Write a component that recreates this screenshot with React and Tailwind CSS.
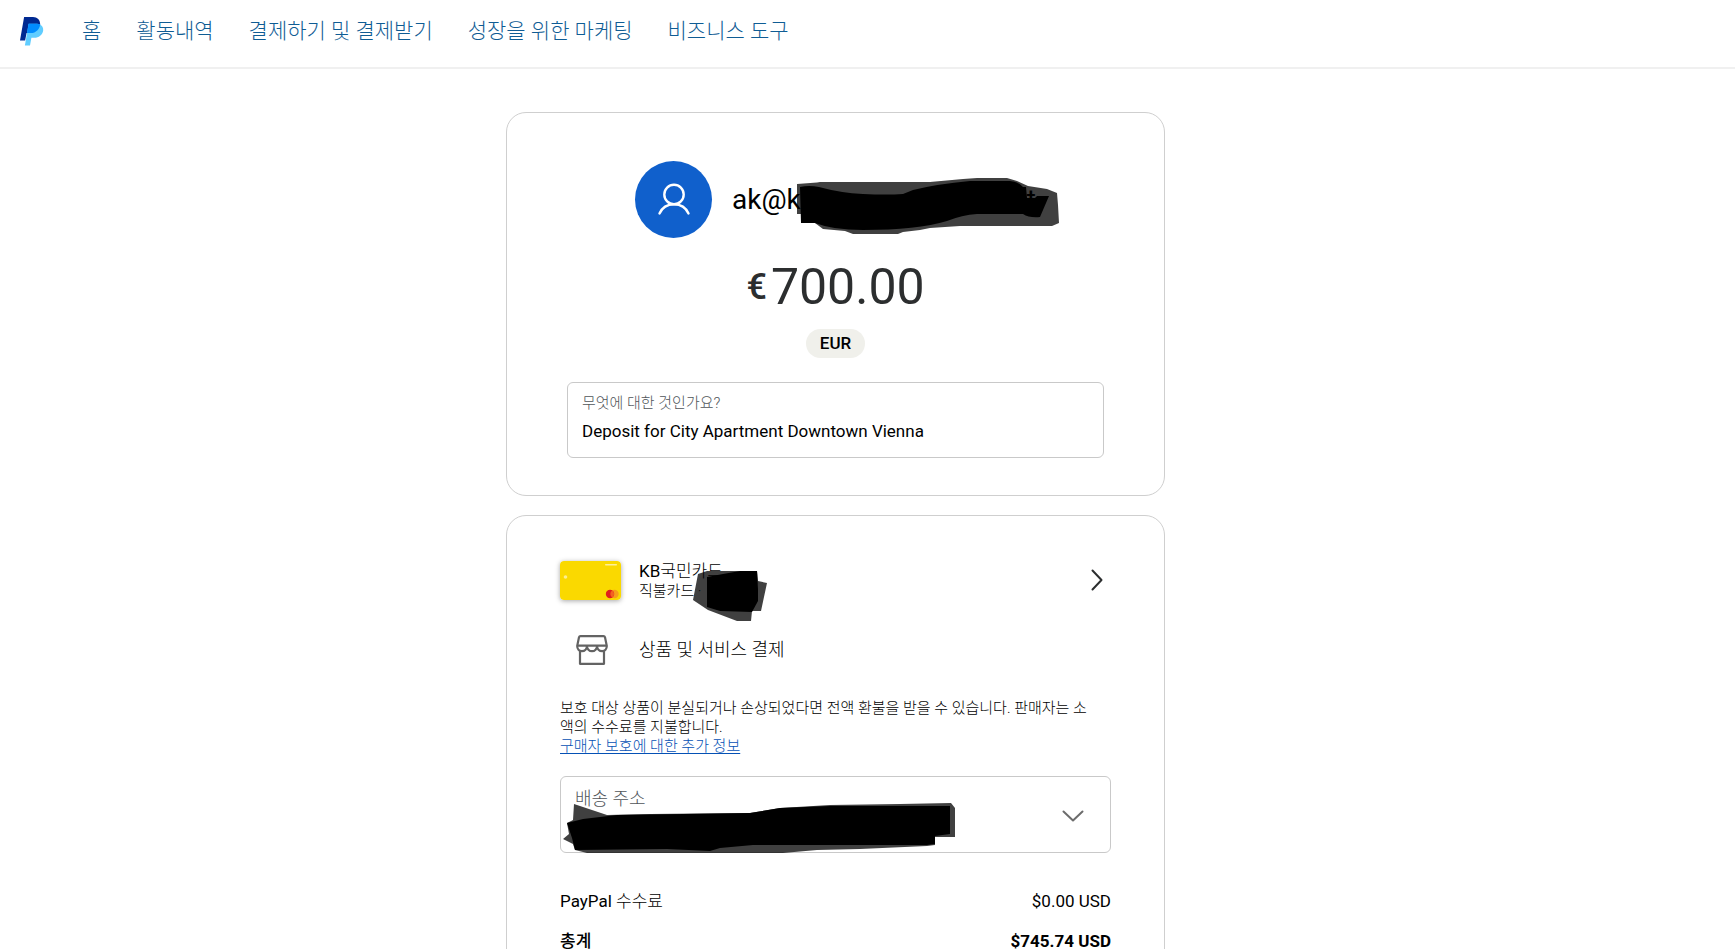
const navItems = ["홈", "활동내역", "결제하기 및 결제받기", "성장을 위한 마케팅", "비즈니스 도구"];

function PayPalMark() {
  return (
    <svg viewBox="0 0 24 29" className="h-[29px] w-6" aria-hidden="true">
      <path d="M20.2 7.2c0 4.8-4 8.9-9.4 8.9H6.6L5.100 23.400H0L4.100 0h8.900c4.300 0 7.200 3 7.200 7.200z" fill="#002991" />
      <path d="M20 7.500c2 .9 3.500 3.200 3.200 6-.6 4.500-4.500 7.300-8.800 7.300h-3L10 28.500H4.900L8.600 6.700h8.400c1.100 0 2.100.3 3 .8z" fill="#60CDFF" />
      <path d="M7 16.100 8.600 6.700h8.400c1.100 0 2.200.3 3.100.8-.3 4.700-4.300 8.600-9.300 8.600z" fill="#008CFF" />
    </svg>
  );
}

function Header() {
  return (
    <header className="flex h-[69px] items-center border-b-2 border-[#f0f0f0] px-5 pb-[5px]">
      <a href="#home" aria-label="PayPal" className="mr-[38px]">
        <PayPalMark />
      </a>
      <nav className="flex gap-[35px] text-[21px] font-light leading-6 text-[#0f5c94]">
        {navItems.map((item) => (
          <a key={item} href="#nav">
            {item}
          </a>
        ))}
      </nav>
    </header>
  );
}

function Redaction({ box, view, outer, inner }) {
  return (
    <svg viewBox={view} className={`pointer-events-none absolute ${box}`} aria-hidden="true">
      <path d={outer} fill="#000" fillOpacity=".75" />
      <path d={inner} fill="#000" />
    </svg>
  );
}

function AmountCard() {
  return (
    <section className="rounded-[20px] border border-[#cfcfcf] bg-white px-[60px] pt-12 pb-[37px]">
      <div className="flex items-center justify-center gap-5">
        <div className="flex size-[77px] shrink-0 items-center justify-center rounded-full bg-[#1060cc]">
          <svg viewBox="0 0 34 34" className="size-[34px]" fill="none" stroke="#fff" strokeWidth="2.4" strokeLinecap="round" aria-hidden="true">
            <circle cx="17" cy="11.500" r="9.700" />
            <path d="M2.500 30.500C5 24.800 10.500 21.200 17 21.200s12 3.600 14.500 9.300" />
          </svg>
        </div>
        <div className="relative flex w-[304px] justify-between text-[28px] leading-9 text-black">
          <span>ak@k</span>
          <span>at</span>
          <Redaction
            box="left-[65px] top-[-4px] h-[56px] w-[262px]"
            view="0 0 262 56"
            outer="M0 6 20 4.500 23 4H133L166 1 180 0H210L220 3 231 8 250 11 260 15 261 27 262 45 255 48H163L133 50 123 52 106 54 101 56H56L48 53 26 51 18 45H4V36H0z"
            inner="M3 9Q12 7 22 9Q44 15 66 16Q90 17 106 16L116 12Q140 6 173 3H213Q222 4 226 9H229L230 20H238L240 18H252L243 39Q232 40 226 36H180Q165 37 150 43Q120 52 66 52Q36 52 18 45H4z"
          />
        </div>
      </div>
      <div className="mt-5 flex items-center justify-center gap-1 text-[#2c2e2f]">
        <span className="text-[36px] font-medium leading-[58px]">€</span>
        <span className="text-[50px] leading-[58px]">700.00</span>
      </div>
      <div className="mt-[13px] flex justify-center">
        <button type="button" className="h-[29px] rounded-full bg-[#f0f0eb] px-[14px] text-[17px] font-medium text-black">
          EUR
        </button>
      </div>
      <div className="mt-6 rounded-md border border-[#c9c9c9] px-[14px] pt-[10px] pb-3">
        <label htmlFor="memo" className="block text-[15px] font-light leading-5 text-[#50555a]">
          무엇에 대한 것인가요?
        </label>
        <input
          id="memo"
          defaultValue="Deposit for City Apartment Downtown Vienna"
          className="mt-1 block h-7 w-full text-[17px] text-black outline-none"
        />
      </div>
    </section>
  );
}

function BankCard() {
  return (
    <svg viewBox="0 0 61 39" className="h-[39px] w-[61px] rounded-[4px] shadow-[0_1px_5px_rgba(0,0,0,0.35)]" aria-hidden="true">
      <rect width="61" height="39" rx="3" fill="#fad900" />
      <rect x="45" y="3" width="12" height="1.500" rx=".7" fill="#fdf09a" />
      <circle cx="5.500" cy="16" r="1.800" fill="#fdee90" />
      <circle cx="54.500" cy="33" r="4.200" fill="#f79e1b" />
      <circle cx="50" cy="33" r="4.200" fill="#e0201b" />
      <path d="M52.200 29.500a4.200 4.200 0 0 1 0 7 4.200 4.200 0 0 1 0-7z" fill="#f26322" />
    </svg>
  );
}

function StoreIcon() {
  return (
    <svg viewBox="0 0 32 30" className="h-[30px] w-8" fill="none" stroke="#636363" strokeWidth="2.200" strokeLinejoin="round" aria-hidden="true">
      <path d="M4.500 1.200h23c.8 0 1.300.4 1.500 1.100L30.800 11c0 2.800-2 5.200-4.700 5.200-2.900 0-5-2.400-5-5.200 0 2.800-2.300 5.200-5.100 5.200s-5.100-2.400-5.100-5.200c0 2.800-2.100 5.200-5 5.200-2.700 0-4.700-2.400-4.700-5.200L3 2.300c.2-.7.7-1.100 1.500-1.100z" />
      <path d="M1.200 10.700h29.600M4 16v12.800h24V16" />
    </svg>
  );
}

function PaymentCard() {
  return (
    <section className="rounded-[20px] border border-[#cfcfcf] bg-white px-[53px] pt-11 pb-12 text-black">
      <button type="button" className="flex w-full items-center text-left">
        <BankCard />
        <span className="relative ml-[18px] flex flex-1 flex-col">
          <span className="text-[17px] leading-[22px]">
            KB<span className="font-light">국민카드</span>
          </span>
          <span className="text-[15px] font-light leading-[18px]">직불카드 ·</span>
          <Redaction
            box="left-[54px] top-[10px] h-[51px] w-[74px]"
            view="0 0 74 51"
            outer="M5 4 14 1H64L65 11 74 13 68 41H59L58 51H44L15 40 0 30z"
            inner="M14 7 30 4 47 1H64L65 19V31L59 42 27 41 14 37z"
          />
        </span>
        <svg viewBox="0 0 12 22" className="mr-2 h-[22px] w-3" fill="none" stroke="#2c2e2f" strokeWidth="2" strokeLinecap="round" strokeLinejoin="round" aria-hidden="true">
          <path d="M1.500 1.500 10.500 11l-9 9.500" />
        </svg>
      </button>
      <div className="mt-[35px] flex items-center">
        <div className="flex w-[79px] pl-4">
          <StoreIcon />
        </div>
        <p className="text-[18px] font-light leading-[30px]">상품 및 서비스 결제</p>
      </div>
      <p className="mt-[34px] pr-3 text-[15px] font-light leading-[19px]">
        보호 대상 상품이 분실되거나 손상되었다면 전액 환불을 받을 수 있습니다. 판매자는 소액의 수수료를 지불합니다.
      </p>
      <a href="#protection" className="block w-fit text-[15px] font-light leading-[19px] text-[#0551b5] underline underline-offset-2">
        구매자 보호에 대한 추가 정보
      </a>
      <div className="relative mt-5 rounded-md border border-[#c9c9c9] px-[14px] pt-[10px] pb-[9px]">
        <label htmlFor="address" className="block text-[18px] font-light leading-6 text-[#50555a]">
          배송 주소
        </label>
        <select id="address" className="block h-8 w-full appearance-none outline-none">
          <option></option>
        </select>
        <svg viewBox="0 0 22 12" className="pointer-events-none absolute right-[26px] top-[33px] h-3 w-[22px]" fill="none" stroke="#6c6c6c" strokeWidth="2" strokeLinecap="round" strokeLinejoin="round" aria-hidden="true">
          <path d="M1.500 1.500 11 10.500l9.500-9" />
        </svg>
        <Redaction
          box="left-[2px] top-[25px] h-[51px] w-[392px]"
          view="0 0 392 51"
          outer="M11 2 44 13 87 12 187 11 217 6 267 3 337 2 388 1 392 6V35H372V43L364 44 297 47 254 48 220 51H24L12 48 10 42 0 37 6 32 4 21 10 18z"
          inner="M4 21 20 17 54 13 187 11 217 6 267 4H387V32L372 34V42L364 43H190L157 46 147 49 104 47 12 48 9 36z"
        />
      </div>
      <dl className="mt-9 text-[17px] leading-6">
        <div className="flex justify-between">
          <dt>
            PayPal <span className="font-light">수수료</span>
          </dt>
          <dd>$0.00 USD</dd>
        </div>
        <div className="mt-4 flex justify-between font-bold">
          <dt className="font-medium">총계</dt>
          <dd>$745.74 USD</dd>
        </div>
      </dl>
    </section>
  );
}

export default function App() {
  return (
    <div className="min-h-screen bg-white font-['Roboto','Noto_Sans_CJK_KR',sans-serif]">
      <Header />
      <main className="flex justify-center pt-[43px] pr-16">
        <div className="flex w-full max-w-[659px] flex-col gap-[19px]">
          <AmountCard />
          <PaymentCard />
        </div>
      </main>
    </div>
  );
}
